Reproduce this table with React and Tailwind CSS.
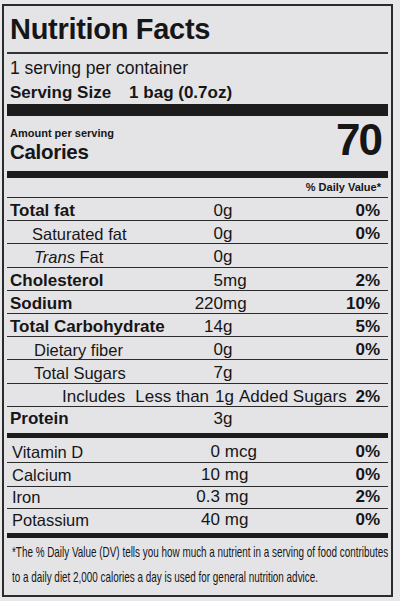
import React from "react";

const nutrients = [
  { label: "Total fat", bold: true, num: "0", unit: "g", pct: "0%", pad: "pl-[3px]" },
  { label: "Saturated fat", num: "0", unit: "g", pct: "0%", pad: "pl-[25px]" },
  { label: "Trans Fat", italic: true, num: "0", unit: "g", pct: "", pad: "pl-[27px]" },
  { label: "Cholesterol", bold: true, num: "5", unit: "mg", pct: "2%", pad: "pl-[3px]" },
  { label: "Sodium", bold: true, num: "220", unit: "mg", pct: "10%", pad: "pl-[3px]" },
  { label: "Total Carbohydrate", bold: true, num: "14", unit: "g", pct: "5%", pad: "pl-[3px]" },
  { label: "Dietary fiber", num: "0", unit: "g", pct: "0%", pad: "pl-[27px]" },
  { label: "Total Sugars", num: "7", unit: "g", pct: "", pad: "pl-[27px]" },
];

const minerals = [
  { label: "Vitamin D", num: "0", unit: " mcg", pct: "0%", row: "h-[23.7px] pt-[4px]" },
  { label: "Calcium", num: "10", unit: " mg", pct: "0%", row: "h-[24px] pt-[2px] border-t-[1.5px] border-[#2b2b2b]" },
  { label: "Iron", num: "0.3", unit: " mg", pct: "2%", row: "h-[22.6px] pt-[0px] border-t-[1.5px] border-[#2b2b2b]" },
  { label: "Potassium", num: "40", unit: " mg", pct: "0%", row: "h-[24.7px] pt-[1px] border-t-[1.5px] border-[#2b2b2b]" },
];

const NutrientRow = ({ n }) => {
  let label = n.label;
  if (n.italic) label = (<><i>Trans</i> Fat</>);
  return (
    <div className="flex h-[23.2px] pt-[3px] pr-[8px] leading-[20px] border-t-[1.5px] border-[#2b2b2b]">
      <div className={`w-[176px] whitespace-nowrap ${n.pad} ${n.bold ? "text-[17px] font-bold" : "text-[16.5px]"}`}>
        {label}
      </div>
      <span className="w-[40px] text-right text-[17px]">{n.num}</span>
      <span className="text-[17px]">{n.unit}</span>
      <span className="ml-auto text-[17px] font-bold">{n.pct}</span>
    </div>
  );
};

export default function App() {
  return (
    <div className="w-[400px] h-[601px] bg-[#e8e8ea] pt-[4px] pl-[2px] font-['Liberation_Sans',Arial,sans-serif] text-[#161616]">
      <div className="w-[391px] h-[593px] border-2 border-[#2b2b2b] bg-[#e4e4e7] px-[3px]">
        <h1 className="mt-[9px] pl-[3px] text-[29px] leading-[29px] font-bold tracking-[-0.3px]">Nutrition Facts</h1>
        <div className="mt-[8px] h-[2px] bg-[#333]" />
        <p className="mt-[4px] pl-[3px] text-[17.5px] leading-[20px]">1 serving per container</p>
        <div className="mt-[5px] pl-[3px] flex text-[17px] leading-[20px] font-bold">
          <span>Serving Size</span>
          <span className="ml-[18px]">1 bag (0.7oz)</span>
        </div>
        <div className="mt-[1px] h-[12px] bg-[#1c1c1c]" />

        <div className="h-[55px] flex justify-between pl-[3px] pr-[7px]">
          <div className="pt-[10px]">
            <div className="text-[11px] leading-[14px] font-bold">Amount per serving</div>
            <div className="text-[20.5px] leading-[24px] font-bold tracking-[-0.3px]">Calories</div>
          </div>
          <div className="pt-[2px] text-[44px] leading-[44px] font-bold tracking-[-2px]">70</div>
        </div>
        <div className="h-[7px] bg-[#1c1c1c]" />

        <div className="mt-[2px] pr-[7px] text-right text-[11px] leading-[14px] font-bold">% Daily Value*</div>

        <div className="mt-[3px]">
          {nutrients.map((n) => (
            <NutrientRow key={n.label} n={n} />
          ))}
          <div className="flex h-[23.2px] pt-[3px] pr-[8px] leading-[20px] text-[17px] border-t-[1.5px] border-[#2b2b2b] whitespace-nowrap">
            <span className="pl-[55px]">Includes</span>
            <span className="ml-[10px]">Less than</span>
            <span className="ml-[6px]">1g</span>
            <span className="ml-[5px]">Added Sugars</span>
            <span className="ml-auto font-bold">2%</span>
          </div>
          <div className="flex h-[27.2px] pt-[2px] pr-[8px] leading-[20px] border-t-[1.5px] border-[#2b2b2b]">
            <div className="w-[176px] pl-[3px] text-[17px] font-bold">Protein</div>
            <span className="w-[40px] text-right text-[17px]">3</span>
            <span className="text-[17px]">g</span>
          </div>
        </div>
        <div className="h-[5px] bg-[#1c1c1c]" />

        {minerals.map((m) => (
          <div key={m.label} className={`flex pr-[8px] leading-[20px] ${m.row}`}>
            <div className="w-[176px] pl-[5px] text-[16.5px]">{m.label}</div>
            <span className="w-[37px] text-right text-[17px]">{m.num}</span>
            <span className="text-[17px] whitespace-pre">{m.unit}</span>
            <span className="ml-auto text-[17px] font-bold">{m.pct}</span>
          </div>
        ))}
        <div className="h-[5px] bg-[#1c1c1c]" />

        <div className="pt-[1px] pl-[5px] text-[15px] leading-[25px]">
          <div className="whitespace-nowrap origin-left scale-x-[0.66]">
            *The % Daily Value (DV) tells you how much a nutrient in a serving of food contributes
          </div>
          <div className="whitespace-nowrap origin-left scale-x-[0.66]">
            to a daily diet 2,000 calories a day is used for general nutrition advice.
          </div>
        </div>
      </div>
    </div>
  );
}
